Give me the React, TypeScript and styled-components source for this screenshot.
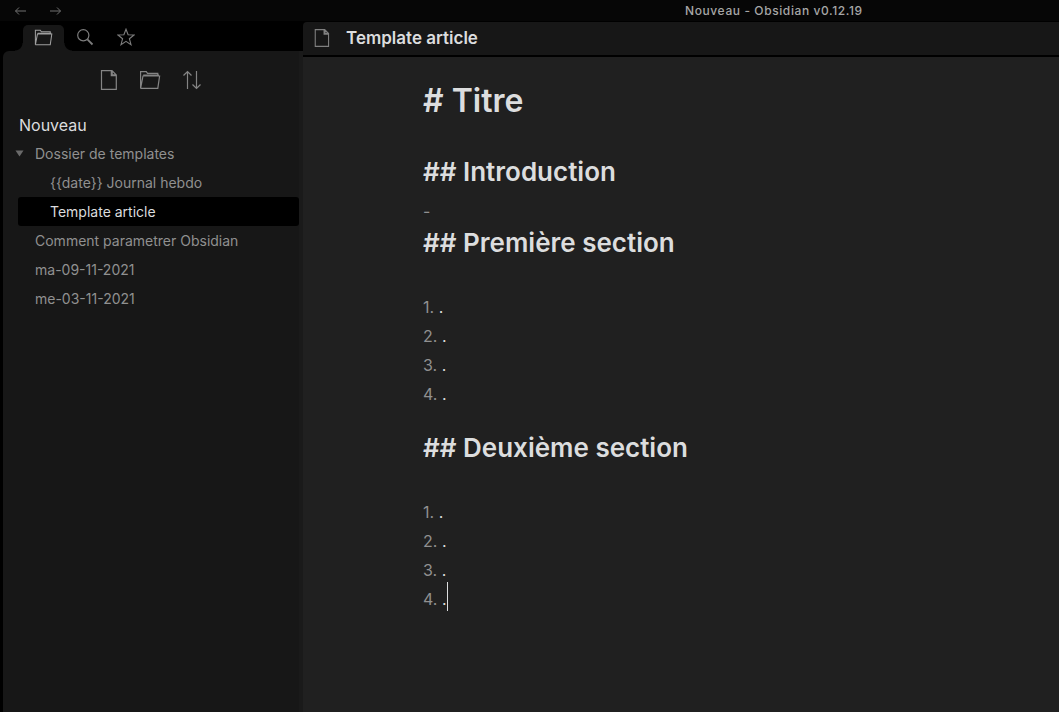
import React from "react";
import styled, { createGlobalStyle } from "styled-components";

const GlobalStyle = createGlobalStyle`
  * { box-sizing: border-box; }
  html, body, #root { height: 100%; }
  body {
    margin: 0;
    background: #000;
    color: #dcddde;
    font-family: Inter, "Liberation Sans", sans-serif;
    font-size: 16px;
  }
  button { font: inherit; border: 0; padding: 0; background: none; cursor: pointer; }
  svg { display: block; fill: none; stroke: currentColor; }
`;

const Window = styled.div`
  display: flex;
  flex-direction: column;
  min-height: 100%;
`;

const TitleBar = styled.header`
  display: flex;
  align-items: center;
  height: 22px;
  padding-left: 13px;
  background: #060606;
  border-bottom: 1px solid #000;
`;

const History = styled.nav`
  display: flex;
  gap: 20px;
  width: 672px;
  color: #707070;
`;

const IconButton = styled.button`
  display: flex;
  align-items: center;
  justify-content: center;
  color: inherit;
`;

const WindowTitle = styled.span`
  color: #a6a6a6;
  font-size: 12px;
  font-weight: 500;
  letter-spacing: 0.05em;
  line-height: 20px;
  white-space: nowrap;
`;

const Workspace = styled.div`
  display: flex;
  flex: 1;
`;

const Sidebar = styled.aside`
  display: flex;
  flex-direction: column;
  flex: none;
  width: 303px;
  padding-left: 3px;
`;

const Tabs = styled.div`
  display: flex;
  height: 29px;
  padding: 3px 0 0 20px;
`;

const Tab = styled.button<{ $active?: boolean }>`
  position: relative;
  display: flex;
  align-items: center;
  justify-content: center;
  width: 41px;
  padding-bottom: 2px;
  color: ${(p) => (p.$active ? "#a0a0a0" : "#7c7c7c")};
  background: ${(p) => (p.$active ? "#171717" : "transparent")};
  border-radius: 5px 5px 0 0;

  &::before,
  &::after {
    content: ${(p) => (p.$active ? '""' : "none")};
    position: absolute;
    bottom: 0;
    width: 8px;
    height: 8px;
  }
  &::before {
    right: 100%;
    background: radial-gradient(circle at 0 0, #000 7px, #171717 8px);
  }
  &::after {
    left: 100%;
    background: radial-gradient(circle at 100% 0, #000 7px, #171717 8px);
  }
`;

const Panel = styled.div`
  flex: 1;
  background: #171717;
  border-right: 4px solid #1a1a1a;
  border-top-left-radius: 6px;
`;

const Toolbar = styled.div`
  display: flex;
  justify-content: center;
  gap: 20px;
  padding-top: 18px;
  color: #848484;
`;

const VaultName = styled.h2`
  margin: 0;
  padding: 22px 16px 2px;
  color: #dcddde;
  font-size: 16px;
  font-weight: 400;
  line-height: 24px;
`;

const Tree = styled.div`
  display: flex;
  flex-direction: column;
  padding-left: 12px;
`;

const Row = styled.button<{ $level?: number; $active?: boolean }>`
  display: flex;
  align-items: center;
  height: 29px;
  margin-left: 3px;
  padding-left: ${(p) => (p.$level ? 32 : 17)}px;
  border-radius: 3px;
  color: ${(p) => (p.$active ? "#dcddde" : "#909090")};
  background: ${(p) => (p.$active ? "#000" : "transparent")};
  font-size: 14px;
  text-align: left;
`;

const FolderRow = styled(Row)`
  gap: 11px;
  margin-left: 0;
  padding-left: 0;
`;

const Pane = styled.main`
  display: flex;
  flex-direction: column;
  flex: 1;
  min-width: 0;
`;

const PaneHeader = styled.div`
  display: flex;
  align-items: center;
  gap: 15px;
  height: 35px;
  padding: 0 0 2px 10px;
  color: #808080;
  background: #171717;
  border-bottom: 2px solid #000;
  border-top-left-radius: 4px;
`;

const PaneTitle = styled.h1`
  margin: 0;
  color: #dcddde;
  font-size: 17px;
  font-weight: 600;
  line-height: 24px;
`;

const Editor = styled.article`
  flex: 1;
  padding: 24px 24px 24px 120px;
  background: #202020;
`;

const Heading1 = styled.h1`
  margin: 0 0 35px;
  font-size: 32px;
  font-weight: 600;
  line-height: 40px;
`;

const Heading2 = styled.h2`
  margin: 0;
  font-size: 26px;
  font-weight: 600;
  line-height: 32px;
`;

const Dash = styled.p`
  margin: 9px 0 1px;
  color: #909090;
  line-height: 29px;
`;

const Lines = styled.div`
  margin: 34px 0 23px;
`;

const Line = styled.p`
  margin: 0;
  line-height: 29px;
`;

const Marker = styled.span`
  color: #909090;
`;

const Current = styled.span`
  position: relative;
`;

const Caret = styled.span`
  position: absolute;
  right: -1px;
  bottom: -2px;
  width: 1px;
  height: 29px;
  background: #dcddde;
`;

const FileIcon = ({ size = 20 }: { size?: number }) => (
  <svg width={size} height={size} viewBox="0 0 20 20" strokeWidth="1.2">
    <path d="M2.5 .7H13L17.3 5V19.3H2.5ZM12.3 .7V5.7H17.3M13.2 1.5V4.8H16.5" />
  </svg>
);

const FolderIcon = ({ size = 22 }: { size?: number }) => (
  <svg width={size} height={size} viewBox="0 0 22 22" strokeWidth="1.2">
    <path d="M1.6 19.4V2.6H7.3L8.5 4.4H18.8V7M1.6 19.4H18.8L20.6 7H4L1.6 19.4M4.2 6.2H20" />
  </svg>
);

const SortIcon = () => (
  <svg width="22" height="22" viewBox="0 0 22 22" strokeWidth="1.2">
    <path d="M6.5 20V2.5M2.5 6.5L6.5 2.5L10.5 6.5M15.5 2V19.5M11.5 15.5L15.5 19.5L19.5 15.5" />
  </svg>
);

const SearchIcon = () => (
  <svg width="18" height="18" viewBox="0 0 18 18" strokeWidth="1.2">
    <circle cx="7.3" cy="7.3" r="5.6" />
    <path d="M11.4 11.4L16.5 16.5" strokeWidth="1.8" />
  </svg>
);

const StarIcon = () => (
  <svg width="18" height="18" viewBox="0 0 18 18" strokeWidth="1.1">
    <path d="M9 1.2L11.1 6.8L17 7L12.4 10.7L14 16.7L9 13.3L4 16.7L5.6 10.7L1 7L6.9 6.8Z" />
  </svg>
);

const ArrowIcon = ({ forward }: { forward?: boolean }) => (
  <svg width="15" height="12" viewBox="0 0 15 12">
    <path d={forward ? "M2 6H12.5M9 2.5L12.5 6L9 9.5" : "M13 6H2.5M6 2.5L2.5 6L6 9.5"} />
  </svg>
);

const files = ["Comment parametrer Obsidian", "ma-09-11-2021", "me-03-11-2021"];

const numbered = ["1.", "2.", "3.", "4."];

function NumberedLines({ caret }: { caret?: boolean }) {
  return (
    <Lines>
      {numbered.map((n, i) => (
        <Line key={n}>
          <Marker>{n} </Marker>
          <Current>
            .{caret && i === numbered.length - 1 && <Caret />}
          </Current>
        </Line>
      ))}
    </Lines>
  );
}

export default function App() {
  return (
    <Window>
      <GlobalStyle />
      <TitleBar>
        <History>
          <IconButton aria-label="Back"><ArrowIcon /></IconButton>
          <IconButton aria-label="Forward"><ArrowIcon forward /></IconButton>
        </History>
        <WindowTitle>Nouveau - Obsidian v0.12.19</WindowTitle>
      </TitleBar>
      <Workspace>
        <Sidebar>
          <Tabs>
            <Tab $active aria-label="Files"><FolderIcon size={19} /></Tab>
            <Tab aria-label="Search"><SearchIcon /></Tab>
            <Tab aria-label="Starred"><StarIcon /></Tab>
          </Tabs>
          <Panel>
            <Toolbar>
              <IconButton aria-label="New note"><FileIcon /></IconButton>
              <IconButton aria-label="New folder"><FolderIcon /></IconButton>
              <IconButton aria-label="Sort order"><SortIcon /></IconButton>
            </Toolbar>
            <VaultName>Nouveau</VaultName>
            <Tree>
              <FolderRow aria-expanded="true">
                <svg width="9" height="7" viewBox="0 0 9 7">
                  <path d="M.5 .5H8.5L4.5 6.5Z" fill="#6a6a6a" stroke="none" />
                </svg>
                Dossier de templates
              </FolderRow>
              <Row $level={1}>{"{{date}} Journal hebdo"}</Row>
              <Row $level={1} $active>Template article</Row>
              {files.map((name) => (
                <Row key={name}>{name}</Row>
              ))}
            </Tree>
          </Panel>
        </Sidebar>
        <Pane>
          <PaneHeader>
            <FileIcon size={18} />
            <PaneTitle>Template article</PaneTitle>
          </PaneHeader>
          <Editor>
            <Heading1># Titre</Heading1>
            <Heading2>## Introduction</Heading2>
            <Dash>-</Dash>
            <Heading2>## Première section</Heading2>
            <NumberedLines />
            <Heading2>## Deuxième section</Heading2>
            <NumberedLines caret />
          </Editor>
        </Pane>
      </Workspace>
    </Window>
  );
}
